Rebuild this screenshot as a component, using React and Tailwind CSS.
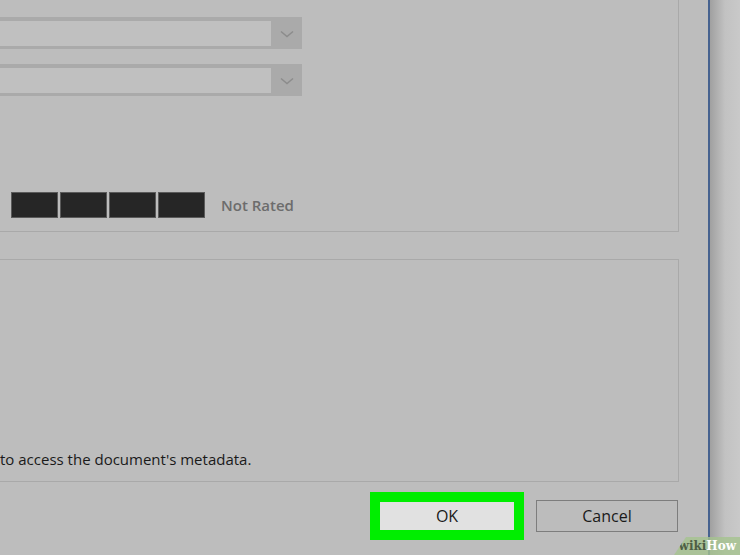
import React from "react";

function Chevron() {
  return (
    <svg width="14" height="8" viewBox="0 0 14 8" fill="none">
      <path d="M1 1.5 L7 6.5 L13 1.5" stroke="#8c8c8c" strokeWidth="1.5" />
    </svg>
  );
}

function Dropdown() {
  return (
    <div className="flex h-[32px] w-[311px] bg-[#aaaaaa] pt-[4px] pb-[3px] pl-[2px] pr-0">
      <div className="flex-1 bg-[#c0c0c0]" />
      <div className="flex w-[31px] items-center justify-center">
        <Chevron />
      </div>
    </div>
  );
}

export default function App() {
  const stars = [0, 1, 2, 3];

  return (
    <div
      className="relative flex h-[555px] w-[740px] overflow-hidden bg-[#bdbdbd]"
      style={{ fontFamily: '"Open Sans", "Liberation Sans", sans-serif' }}
    >
      {/* Dialog body */}
      <div className="flex w-[708px] flex-col">
        {/* Properties group */}
        <div className="-mt-[10px] -ml-[20px] flex h-[242px] w-[699px] flex-col border border-[#a9a9a9] pl-[10px] pt-[26px]">
          <Dropdown />
          <div className="mt-[15px]">
            <Dropdown />
          </div>
          <div className="mt-[96px] ml-[20px] flex items-center">
            <div className="flex gap-[2px]">
              {stars.map((i) => (
                <div key={i} className="h-[26px] w-[47px] border border-[#5a5a5a] bg-[#262626]" />
              ))}
            </div>
            <span className="ml-[16px] text-[15px] font-semibold text-[#6c6c6c]">Not Rated</span>
          </div>
        </div>

        {/* Info group */}
        <div className="-ml-[20px] mt-[27px] flex h-[223px] w-[699px] flex-col justify-end border border-[#a9a9a9] pb-[12px] pl-[19px]">
          <p className="text-[15px] font-medium leading-[20px] text-[#1a1a1a]">to access the document's metadata.</p>
        </div>

        {/* Buttons */}
        <div className="mt-[10px] flex items-center justify-end gap-[12px] pr-[30px]">
          <div className="bg-[#00ee00] p-[10px]">
            <button className="h-[28px] w-[134px] bg-[#e1e1e1] text-[16px] font-medium text-[#1a1a1a]">OK</button>
          </div>
          <button className="h-[32px] w-[142px] border border-[#7d7d7d] bg-[#bcbcbc] text-[16px] font-medium text-[#1a1a1a]">
            Cancel
          </button>
        </div>
      </div>

      {/* Window edge */}
      <div className="w-[2px] bg-[#46628f]" />
      <div className="flex-1 bg-gradient-to-r from-[#a0a0a0] via-[#c2c2c2] to-[#c9c9c9]" />

      {/* Watermark */}
      <div
        className="absolute bottom-0 right-0 flex h-[18px] w-[66px] items-center justify-end bg-[#a5c38f]/80 pr-[4px]"
        style={{ clipPath: "polygon(12px 0, 100% 0, 100% 100%, 0 100%)" }}
      >
        <span className="text-[12px] font-bold leading-none text-[#4e5e44]" style={{ fontFamily: '"DejaVu Serif", serif' }}>
          wiki
        </span>
        <span className="text-[12px] font-bold leading-none text-white" style={{ fontFamily: '"DejaVu Serif", serif' }}>
          How
        </span>
      </div>
    </div>
  );
}
